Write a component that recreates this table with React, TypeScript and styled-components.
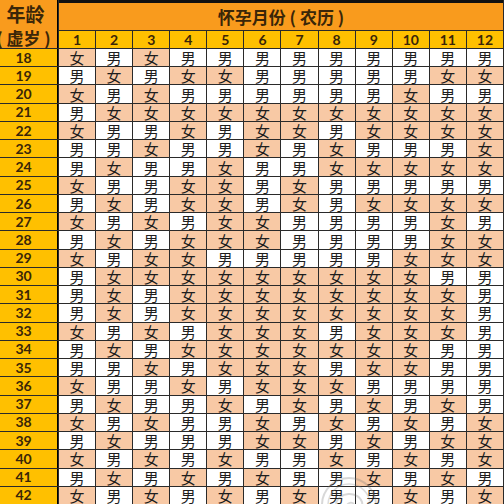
import React from "react";
import styled, { createGlobalStyle } from "styled-components";

const Global = createGlobalStyle`
  html, body { margin: 0; padding: 0; background: #fff; overflow: hidden; }
  body { font-family: "Noto Sans CJK SC", "Noto Sans", sans-serif; }
`;

const ORANGE = "#F99B1D";
const GOLD = "#FFC000";
const PEACH = "#F8C9A5";
const LINE = "#2a2a2a";

const rows: string[] = [
  "女男女男男男男男男男男男",
  "男女男女女男男男男男女女",
  "女男女男男男男男男女男男",
  "男女女女女女女女女女女女",
  "女男男女男女女男女女女女",
  "男男女男男女男女男男男女",
  "男女男男女男男女女女女女",
  "女男男女女男女男男男男男",
  "男女男女女男女男女女女女",
  "女男女男女女男男男男女男",
  "男女男女女女男男男男女女",
  "女男女女男男男男男女女女",
  "男女女女女女女女女女男男",
  "男女男女女女女女女女女男",
  "男女男女女女女女女女女男",
  "女男女男女女女男女女女男",
  "男女男女女女女女女女男男",
  "男男女男女女女男女女男男",
  "女男男女男女女女男男男男",
  "男女男男女男女男女男女男",
  "女男女男男女男女男女男女",
  "男女男男男女女男女男女女",
  "女男女男女男男女男女男女",
  "男女男女男女男男女男女男",
  "女男女男女男女男男女男女",
];

const Page = styled.div`
  position: relative;
  width: 504px;
  height: 504px;
  overflow: hidden;
`;

const Grid = styled.div`
  display: grid;
  grid-template-columns: 58px repeat(12, 1fr);
  grid-template-rows: 30px 17px repeat(25, 1fr);
  gap: 1px;
  width: 504px;
  height: 504px;
  box-sizing: border-box;
  padding-right: 1px;
  background: ${LINE};
`;

const CornerCell = styled.div`
  grid-row: 1 / span 2;
  background: ${ORANGE};
  border-right: 1px solid #000;
  display: flex;
  flex-direction: column;
  align-items: center;
  justify-content: center;
  gap: 6px;
  padding-right: 6px;
  font-weight: 700;
  color: #3a2608;
  white-space: nowrap;
`;

const CornerTop = styled.div`
  font-size: 19px;
  line-height: 19px;
  margin-top: 2px;
`;

const CornerBottom = styled.div`
  font-size: 17px;
  line-height: 17px;
  margin-left: -4px;
`;

const TitleCell = styled.div`
  grid-column: 2 / span 12;
  background: ${ORANGE};
  border-top: 3px solid #111;
  box-sizing: border-box;
  display: flex;
  align-items: center;
  justify-content: center;
  font-size: 17px;
  line-height: 20px;
  font-weight: 700;
  color: #3a2608;
  padding-top: 1px;
  white-space: pre;
`;

const MonthCell = styled.div`
  background: ${GOLD};
  display: flex;
  align-items: center;
  justify-content: center;
  font-family: Lato, "Open Sans", sans-serif;
  font-weight: 700;
  font-size: 14px;
  line-height: 14px;
  color: #3a2608;
`;

const AgeCell = styled.div`
  background: ${GOLD};
  border-right: 1px solid #000;
  display: flex;
  align-items: center;
  justify-content: center;
  padding-right: 10px;
  font-family: Lato, "Open Sans", sans-serif;
  font-weight: 700;
  font-size: 14px;
  line-height: 14px;
  color: #3a2608;
`;

const SexCell = styled.div<{ $girl: boolean }>`
  background: ${(p) => (p.$girl ? PEACH : "#ffffff")};
  display: flex;
  align-items: center;
  justify-content: center;
  font-size: 15px;
  font-weight: 400;
  color: #1e1e1e;
  line-height: 15px;
`;

const Watermark = styled.svg`
  position: absolute;
  left: 318px;
  top: 474px;
  width: 62px;
  height: 62px;
  opacity: 0.28;
  pointer-events: none;
`;

export default function App() {
  return (
    <Page>
      <Global />
      <Grid>
        <CornerCell>
          <CornerTop>年龄</CornerTop>
          <CornerBottom>( 虚岁 )</CornerBottom>
        </CornerCell>
        <TitleCell>{"怀孕月份 ( 农历 )"}</TitleCell>
        {Array.from({ length: 12 }, (_, i) => (
          <MonthCell key={`m${i}`}>{i + 1}</MonthCell>
        ))}
        {rows.map((r, ri) => (
          <React.Fragment key={ri}>
            <AgeCell>{18 + ri}</AgeCell>
            {Array.from(r).map((c, ci) => (
              <SexCell key={ci} $girl={c === "女"}>
                {c}
              </SexCell>
            ))}
          </React.Fragment>
        ))}
      </Grid>
      <Watermark viewBox="0 0 62 62">
        <circle cx="31" cy="31" r="27" fill="none" stroke="#777" strokeWidth="2" />
        <circle cx="31" cy="31" r="21" fill="none" stroke="#888" strokeWidth="1.5" />
        <path d="M18 30 C20 18, 40 16, 44 28 C46 36, 36 42, 30 36 C26 32, 32 26, 36 30" fill="none" stroke="#777" strokeWidth="2" />
      </Watermark>
    </Page>
  );
}
